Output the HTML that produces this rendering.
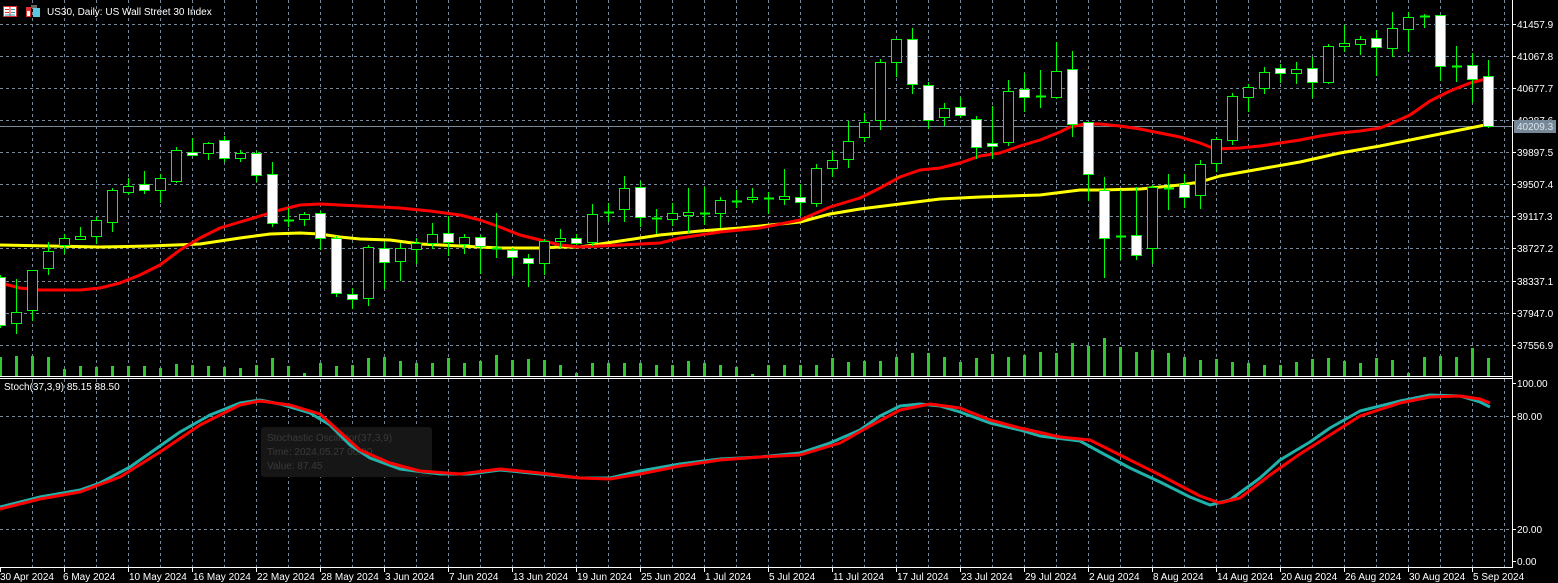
<!DOCTYPE html>
<html><head><meta charset="utf-8"><style>
html,body{margin:0;padding:0;background:#000;width:1558px;height:583px;overflow:hidden}
svg{display:block}
text{font-family:"Liberation Sans","DejaVu Sans",sans-serif;font-size:10px}
</style></head><body>
<svg id="s" width="1558" height="583" viewBox="0 0 1558 583" xmlns="http://www.w3.org/2000/svg" shape-rendering="crispEdges">
<g id="grid" stroke="#778899" stroke-dasharray="3,3" stroke-width="1"></g>
<rect x="261" y="427" width="171" height="50" rx="3" fill="#161616"/>
<text x="267" y="441" fill="#3a3a3a" font-size="11">Stochastic Oscillator(37,3,9)</text>
<text x="267" y="455" fill="#3a3a3a" font-size="11">Time: 2024.05.27 00:00</text>
<text x="267" y="469" fill="#3a3a3a" font-size="11">Value: 87.45</text>
<line x1="0" y1="126.5" x2="1512" y2="126.5" stroke="#778899"/>
<g id="vol" fill="#32c832"></g>
<g id="ma" fill="none" stroke-width="3" shape-rendering="auto"></g>
<g id="cd"></g>
<g id="st" fill="none" stroke-width="3" shape-rendering="auto"></g>
<line x1="0" y1="376.5" x2="1512" y2="376.5" stroke="#fff"/>
<line x1="0" y1="378.5" x2="1512" y2="378.5" stroke="#fff"/>
<line x1="1512.5" y1="0" x2="1512.5" y2="567" stroke="#fff"/>
<line x1="0" y1="567.5" x2="1513" y2="567.5" stroke="#fff"/>
<g id="ticks" stroke="#fff"></g>
<g fill="#fff">
<text x="1517" y="28">41457.9</text>
<text x="1517" y="60">41067.8</text>
<text x="1517" y="92">40677.7</text>
<text x="1517" y="156">39897.5</text>
<text x="1517" y="188">39507.4</text>
<text x="1517" y="220">39117.3</text>
<text x="1517" y="252">38727.2</text>
<text x="1517" y="285">38337.1</text>
<text x="1517" y="317">37947.0</text>
<text x="1517" y="349">37556.9</text>
<text x="1517" y="387">100.00</text>
<text x="1517" y="420">80.00</text>
<text x="1517" y="533">20.00</text>
<text x="1517" y="565">0.00</text>
</g>
<text x="1517" y="124" fill="#fff">40287.6</text>
<rect x="1514" y="120" width="42" height="13" fill="#778899"/>
<text x="1517" y="130" fill="#dde4ea">40209.3</text>
<g fill="#fff">
<text x="0" y="580">30 Apr 2024</text><text x="63" y="580">6 May 2024</text><text x="129" y="580">10 May 2024</text><text x="193" y="580">16 May 2024</text><text x="257" y="580">22 May 2024</text><text x="321" y="580">28 May 2024</text><text x="385" y="580">3 Jun 2024</text><text x="449" y="580">7 Jun 2024</text><text x="513" y="580">13 Jun 2024</text><text x="577" y="580">19 Jun 2024</text><text x="641" y="580">25 Jun 2024</text><text x="705" y="580">1 Jul 2024</text><text x="769" y="580">5 Jul 2024</text><text x="833" y="580">11 Jul 2024</text><text x="897" y="580">17 Jul 2024</text><text x="961" y="580">23 Jul 2024</text><text x="1025" y="580">29 Jul 2024</text><text x="1089" y="580">2 Aug 2024</text><text x="1153" y="580">8 Aug 2024</text><text x="1217" y="580">14 Aug 2024</text><text x="1281" y="580">20 Aug 2024</text><text x="1345" y="580">26 Aug 2024</text><text x="1409" y="580">30 Aug 2024</text><text x="1473" y="580">5 Sep 2024</text>
</g>
<text x="4" y="390" fill="#fff">Stoch(37,3,9) 85.15 88.50</text>
<g>
<rect x="3.5" y="6.5" width="13" height="10" fill="#fff" stroke="#e03030"/>
<line x1="10" y1="7" x2="10" y2="16" stroke="#e03030"/>
<line x1="5" y1="9.5" x2="9" y2="9.5" stroke="#e03030"/><line x1="5" y1="12.5" x2="9" y2="12.5" stroke="#e03030"/>
<line x1="11" y1="9.5" x2="15" y2="9.5" stroke="#20a0b0"/><line x1="11" y1="12.5" x2="15" y2="12.5" stroke="#20a0b0"/><line x1="5" y1="15" x2="15" y2="15" stroke="#20a0b0"/>
<rect x="26" y="7" width="5" height="10" fill="#e03030"/>
<rect x="27" y="11" width="3" height="5" fill="#fff"/>
<rect x="31" y="5" width="6" height="3" fill="#666"/>
<rect x="33" y="8" width="7" height="9" fill="#5ac8e0"/>
</g>
<text x="47" y="15" fill="#fff" font-size="11">US30, Daily:  US Wall Street 30 Index</text>
</svg>
<script>
var NS="http://www.w3.org/2000/svg";
function el(p,t,a){var e=document.createElementNS(NS,t);for(var k in a)e.setAttribute(k,a[k]);document.getElementById(p).appendChild(e);return e;}
// grid
for(var x=32;x<=1504;x+=32){el("grid","line",{x1:x+.5,y1:0,x2:x+.5,y2:376});el("grid","line",{x1:x+.5,y1:379,x2:x+.5,y2:567});}
[24,56,88,120,152,184,216,248,281,313,345].forEach(function(y){el("grid","line",{x1:0,y1:y+.5,x2:1512,y2:y+.5});});
[416,529].forEach(function(y){el("grid","line",{x1:0,y1:y+.5,x2:1512,y2:y+.5});});
// ticks
[24,56,88,120,152,184,216,248,281,313,345,383,416,529,561].forEach(function(y){el("ticks","line",{x1:1512,y1:y+.5,x2:1516,y2:y+.5});});
for(var x=0;x<=1472;x+=64){el("ticks","line",{x1:x+.5,y1:567,x2:x+.5,y2:572});}
// candles [bt,bb,wt,wb,type] type 1 white,0 black,2 doji
var C=[[277,325,275,327,1],[312,323,279,333,0],[270,310,270,320,0],[251,268,242,274,0],[238,245,234,253,0],[236,239,227,239,0],[220,236,217,243,0],[190,222,188,231,0],[186,192,178,194,0],[184,190,171,193,1],[178,190,174,202,0],[150,181,147,182,0],[152,155,138,155,1],[143,153,142,159,0],[140,158,136,161,1],[153,158,150,161,0],[153,175,151,181,1],[174,223,162,226,1],[220,222,208,226,2],[214,219,212,225,0],[213,238,211,249,1],[238,293,236,296,1],[294,299,288,308,1],[247,298,245,305,0],[248,262,242,288,1],[248,261,243,280,0],[243,249,238,263,0],[234,243,223,248,0],[233,242,216,255,1],[237,244,234,253,0],[237,246,235,273,1],[248,249,213,257,2],[250,257,248,275,1],[258,263,254,286,1],[241,263,239,274,0],[238,241,229,247,0],[238,243,234,244,1],[214,242,204,245,0],[212,212,203,221,2],[188,209,176,221,0],[187,217,181,226,1],[218,218,209,233,2],[213,219,203,225,0],[212,215,188,232,0],[213,213,187,224,2],[200,213,197,227,0],[201,201,190,207,2],[197,199,188,202,0],[198,198,192,213,2],[196,199,169,204,0],[197,202,184,215,1],[168,203,164,206,0],[160,168,151,176,0],[141,159,121,167,0],[122,137,113,141,0],[62,120,59,129,0],[39,62,39,76,0],[39,84,28,93,1],[85,120,82,128,1],[108,117,103,125,0],[107,115,97,117,1],[119,147,116,158,1],[143,146,106,158,1],[91,142,80,145,0],[89,97,73,111,1],[96,96,70,107,2],[71,97,42,98,0],[69,124,51,136,1],[122,174,122,200,1],[190,238,177,277,1],[236,236,190,259,2],[235,255,187,259,1],[187,248,185,263,0],[188,188,174,209,2],[184,197,174,207,1],[164,195,160,208,0],[139,163,137,171,0],[96,140,93,144,0],[87,97,84,111,0],[72,88,67,93,0],[68,73,64,82,1],[69,73,62,83,0],[68,82,57,97,1],[46,82,44,83,0],[43,46,25,51,0],[39,44,36,54,0],[38,47,30,75,1],[28,48,12,56,0],[17,29,12,51,0],[16,16,14,27,2],[15,66,15,80,1],[66,66,46,81,2],[65,79,53,102,1],[76,126,60,127,1]];
var V=[357,356,356,357,369,366,367,366,366,366,368,364,365,366,367,368,365,358,366,373,363,366,365,358,357,361,363,363,358,363,361,355,360,359,360,365,373,363,363,363,363,365,365,361,363,365,367,374,365,365,365,365,358,362,361,361,357,353,353,357,362,358,354,357,355,352,353,343,346,338,347,352,350,353,357,360,359,362,363,365,365,362,359,358,361,363,358,360,373,357,356,357,348,358];
C.forEach(function(c,k){var x=16*k;
 el("vol","rect",{x:x-1,y:V[k],width:3,height:376-V[k]});});
C.forEach(function(c,k){var x=16*k;
 el("cd","line",{x1:x+.5,y1:c[2],x2:x+.5,y2:c[3]+1,stroke:"#00ff00"});
 if(c[4]==2){el("cd","line",{x1:x-4,y1:c[0]+.5,x2:x+6,y2:c[0]+.5,stroke:"#00ff00","stroke-width":2});}
 else{el("cd","rect",{x:x-4.5,y:c[0]+.5,width:10,height:Math.max(1,c[1]-c[0]),fill:c[4]?"#fff":"#000",stroke:"#00ff00"});}
});
function pl(g,pts,col){el(g,"polyline",{points:pts.map(function(p){return p.join(",")}).join(" "),stroke:col,"stroke-linejoin":"round"});}
pl("ma",[[0,245],[50,246],[100,247],[150,246],[200,244],[240,238],[270,234],[300,233],[320,234],[340,237],[360,239],[390,240],[420,244],[460,246],[500,248],[540,248],[560,247],[580,247],[600,244],[620,241],[640,238],[660,235],[700,231],[740,228],[780,224],[800,222],[830,214],[860,209],[900,204],[940,199],[980,197],[1040,195],[1080,190],[1100,190],[1140,189],[1160,187],[1180,185],[1200,182],[1220,176],[1260,169],[1300,162],[1340,153],[1380,146],[1420,138],[1460,130],[1490,124]],"#ffff00");
pl("ma",[[0,283],[20,288],[40,290],[80,290],[100,288],[120,283],[140,275],[160,265],[180,250],[200,238],[220,228],[240,222],[260,216],[280,210],[300,205],[320,204],[340,205],[380,207],[400,208],[430,211],[460,215],[480,220],[500,227],[520,235],[540,240],[560,245],[580,247],[600,246],[620,245],[660,243],[680,238],[700,235],[720,232],[760,228],[800,220],[830,207],[860,198],[880,188],[900,177],[920,170],[940,168],[960,163],[980,156],[1000,153],[1020,146],[1040,140],[1060,132],[1070,127],[1085,124],[1100,124],[1120,126],[1140,129],[1160,133],[1180,137],[1200,143],[1215,149],[1240,148],[1260,146],[1280,143],[1300,140],[1320,136],[1340,133],[1360,131],[1380,128],[1390,124],[1410,115],[1430,101],[1450,91],[1470,83],[1490,78]],"#ff0000");
pl("st",[[0,507],[40,497],[80,490],[100,483],[130,467],[160,446],[180,432],[210,415],[240,403],[260,400],[280,404],[310,413],[330,425],[350,445],[370,458],[400,469],[440,474],[470,474],[500,470],[540,474],[580,478],[610,478],[640,471],[680,464],[720,459],[760,457],[800,453],[830,443],[860,430],[880,416],[900,406],[920,404],[940,406],[960,412],[990,423],[1020,430],[1040,436],[1080,441],[1100,452],[1130,468],[1160,482],[1190,497],[1210,505],[1230,500],[1260,478],[1280,460],[1310,442],[1330,428],[1360,411],[1400,401],[1430,395],[1460,396],[1480,402],[1490,407]],"#20b2aa");
pl("st",[[0,509],[40,499],[80,492],[120,477],[160,452],[200,425],[240,405],[260,401],[290,405],[320,414],[340,432],[360,450],[390,463],[420,471],[460,474],[500,469],[540,473],[580,478],[610,479],[640,474],[680,466],[720,460],[760,457],[800,455],[840,443],[870,426],[900,410],[930,404],[960,408],[990,420],[1020,428],[1060,437],[1090,440],[1120,455],[1160,475],[1200,496],[1220,503],[1240,498],[1270,475],[1300,454],[1330,435],[1360,416],[1400,403],[1430,397],[1460,396],[1480,399],[1490,403]],"#ff0000");
</script>
</body></html>
